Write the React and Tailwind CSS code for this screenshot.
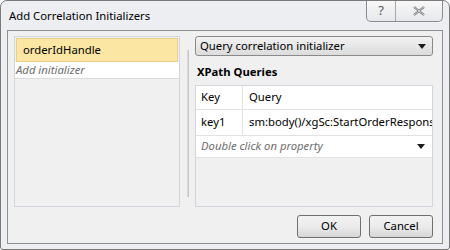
const FONT = { fontFamily: '"Noto Sans", "Open Sans", sans-serif' }

function Caret() {
  return (
    <svg width="8" height="5" viewBox="0 0 8 5" className="shrink-0">
      <path d="M0 0 H8 L4 5 Z" fill="#1a1a1a" />
    </svg>
  )
}

function CaptionButtons() {
  return (
    <div className="flex h-[21px] border border-t-0 border-[#8c8c8c] rounded-b-[5px] bg-gradient-to-b from-[#f8f8f8] to-[#e6e8ec] overflow-hidden">
      <div className="w-[29px] flex items-center justify-center border-r border-[#a8a8a8] text-[13px] text-[#555]">
        ?
      </div>
      <div className="w-[46px] flex items-center justify-center">
        <svg width="12" height="10" viewBox="0 0 12 10">
          <path d="M1 1 L11 9 M11 1 L1 9" stroke="#666" strokeWidth="2.2" fill="none" />
          <path d="M1 1 L11 9 M11 1 L1 9" stroke="#f4f4f4" strokeWidth="0.8" fill="none" />
        </svg>
      </div>
    </div>
  )
}

export default function App() {
  return (
    <div style={FONT} className="w-[450px] h-[250px] bg-white">
      <div className="w-[450px] h-[250px] flex flex-col bg-[#eceef2] border border-[#7a7a7a] rounded-t-[7px] rounded-b-[3px] text-[11.3px] text-black">
        {/* title bar */}
        <div className="h-[29px] flex items-start justify-between pl-[8px] pr-[6px]">
          <span className="mt-[7px] text-[11.3px] leading-[16px]">Add Correlation Initializers</span>
          <CaptionButtons />
        </div>

        {/* client */}
        <div className="mx-[6px] h-[214px] flex flex-col bg-[#f0f0f0] border border-[#8e8f8f] pl-[6px] pr-[9px] pt-[5px]">
          <div className="h-[171px] flex">
            {/* left list */}
            <div className="w-[166px] shrink-0 h-full border border-[#d3d5dd] bg-[#f0f0f0] flex flex-col">
              <div className="mx-[1px] mt-[1px] h-[24px] flex items-center px-[6px] bg-[#fbe6a4] border border-[#e8cf85]">
                orderIdHandle
              </div>
              <div className="h-[17px] flex items-center px-[1px] bg-white border-b border-[#dcdcdc] italic text-[#6d6d6d]">
                Add initializer
              </div>
            </div>

            {/* splitter */}
            <div className="w-[15px] shrink-0 flex justify-center pt-[14px] pb-[10px]">
              <div className="w-[2px] h-full bg-[#d9d9d9] border-r border-[#c6c6c6]" />
            </div>

            {/* right panel */}
            <div className="flex-1 min-w-0 flex flex-col">
              <div className="h-[20px] flex items-center justify-between px-[4px] pr-[6px] border border-[#8a8a8a] rounded-[3px] bg-gradient-to-b from-[#f2f2f2] to-[#dcdcdc]">
                <span>Query correlation initializer</span>
                <Caret />
              </div>
              <div className="mt-[8px] pl-[2px] font-bold leading-[16px]">XPath Queries</div>
              <div className="mt-[5px] flex-1 border border-[#d3d5dd] bg-[#f0f0f0] flex flex-col">
                <div className="h-[24px] flex bg-white border-b border-[#e2e2e2]">
                  <div className="w-[47px] shrink-0 flex items-center px-[5px] border-r border-[#e2e2e2]">Key</div>
                  <div className="flex-1 flex items-center px-[6px]">Query</div>
                </div>
                <div className="h-[26px] flex bg-white border-b border-[#e2e2e2]">
                  <div className="w-[47px] shrink-0 flex items-center px-[5px] border-r border-[#e2e2e2]">key1</div>
                  <div className="flex-1 min-w-0 flex items-center px-[6px] whitespace-nowrap overflow-hidden">
                    sm:body()/xgSc:StartOrderResponse
                  </div>
                </div>
                <div className="h-[22px] flex items-center justify-between pl-[5px] pr-[7px] bg-white border-b border-[#e2e2e2] italic text-[#6d6d6d]">
                  <span>Double click on property</span>
                  <Caret />
                </div>
              </div>
            </div>
          </div>

          {/* buttons */}
          <div className="mt-[8px] flex justify-end gap-[8px]">
            <button className="w-[64px] h-[23px] border border-[#707070] rounded-[3px] bg-gradient-to-b from-[#f2f2f2] via-[#ebebeb] to-[#d6d6d6]">
              OK
            </button>
            <button className="w-[64px] h-[23px] border border-[#707070] rounded-[3px] bg-gradient-to-b from-[#f2f2f2] via-[#ebebeb] to-[#d6d6d6]">
              Cancel
            </button>
          </div>
        </div>
      </div>
    </div>
  )
}
